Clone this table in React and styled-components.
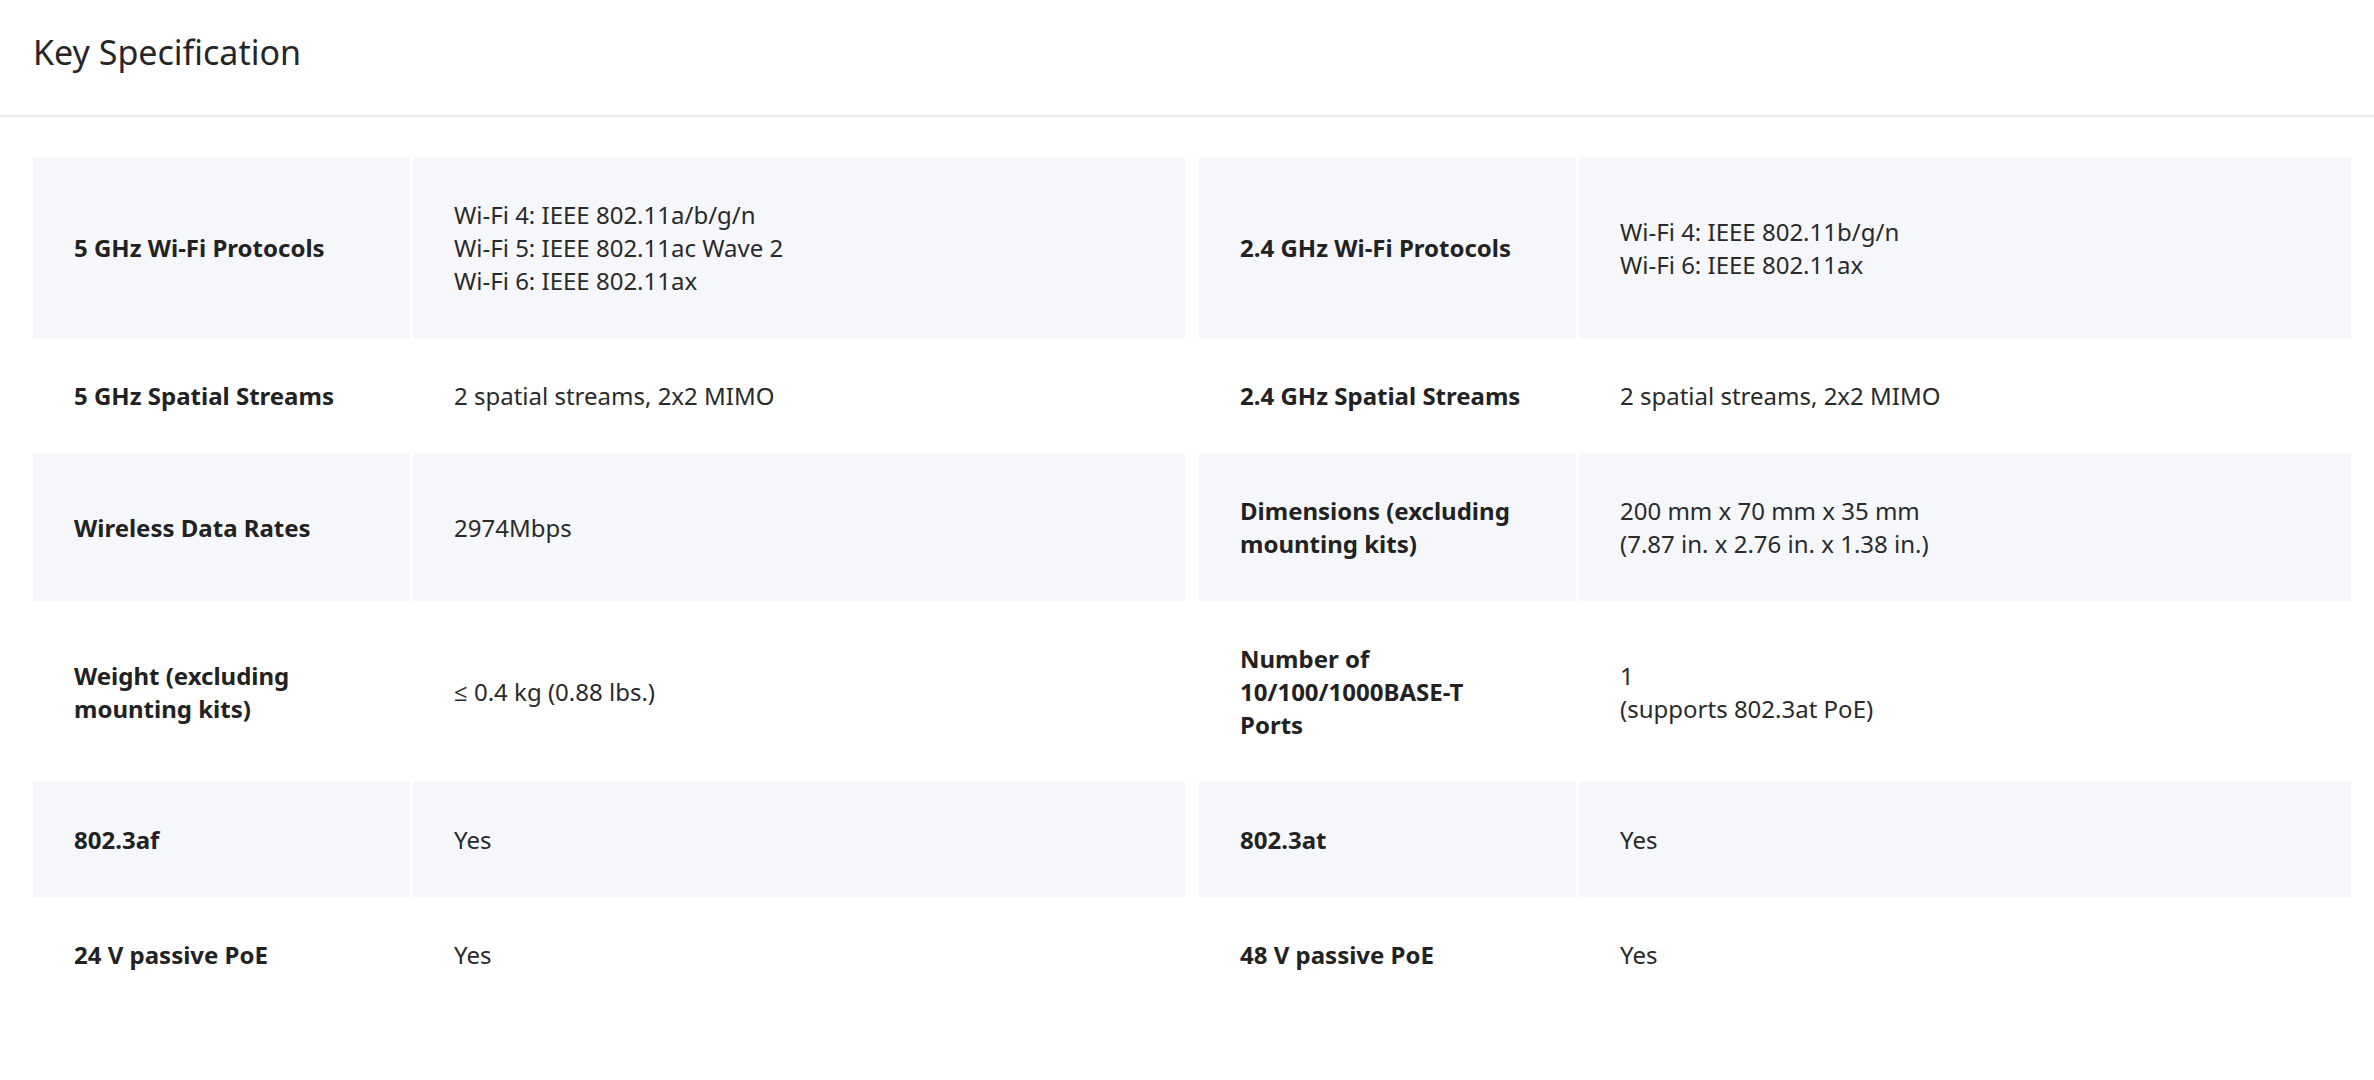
import React from "react";
import styled, { createGlobalStyle } from "styled-components";

const specs = [
  [
    {
      label: "5 GHz Wi-Fi Protocols",
      value: [
        "Wi-Fi 4: IEEE 802.11a/b/g/n",
        "Wi-Fi 5: IEEE 802.11ac Wave 2",
        "Wi-Fi 6: IEEE 802.11ax",
      ],
    },
    {
      label: "2.4 GHz Wi-Fi Protocols",
      value: ["Wi-Fi 4: IEEE 802.11b/g/n", "Wi-Fi 6: IEEE 802.11ax"],
    },
  ],
  [
    { label: "5 GHz Spatial Streams", value: ["2 spatial streams, 2x2 MIMO"] },
    { label: "2.4 GHz Spatial Streams", value: ["2 spatial streams, 2x2 MIMO"] },
  ],
  [
    { label: "Wireless Data Rates", value: ["2974Mbps"] },
    {
      label: "Dimensions (excluding mounting kits)",
      value: ["200 mm x 70 mm x 35 mm", "(7.87 in. x 2.76 in. x 1.38 in.)"],
    },
  ],
  [
    {
      label: "Weight (excluding mounting kits)",
      value: ["≤ 0.4 kg (0.88 lbs.)"],
    },
    {
      label: "Number of 10/100/1000BASE-T Ports",
      value: ["1", "(supports 802.3at PoE)"],
    },
  ],
  [
    { label: "802.3af", value: ["Yes"] },
    { label: "802.3at", value: ["Yes"] },
  ],
  [
    { label: "24 V passive PoE", value: ["Yes"] },
    { label: "48 V passive PoE", value: ["Yes"] },
  ],
];

const GlobalStyle = createGlobalStyle`
  body {
    margin: 0;
    background: #ffffff;
    font-family: "Noto Sans", "Open Sans", sans-serif;
  }
`;

const Page = styled.div`
  width: 2374px;
`;

const Header = styled.div`
  height: 117px;
  box-sizing: border-box;
  padding: 29px 0 0 33px;
  border-bottom: 2px solid #ececec;
`;

const Title = styled.h2`
  margin: 0;
  font-size: 34px;
  font-weight: 400;
  color: #262626;
  line-height: 46px;
`;

const Table = styled.div`
  margin-top: 40px;
  padding: 0 23px 0 33px;
  display: flex;
  flex-direction: column;
`;

const Row = styled.div`
  display: grid;
  grid-template-columns: 1fr 1fr;
  column-gap: 14px;
`;

const Pair = styled.div`
  display: grid;
  grid-template-columns: 377px 1fr;
  column-gap: 3px;
`;

const Cell = styled.div`
  display: flex;
  align-items: center;
  box-sizing: border-box;
  padding: 41px;
  background: ${(p) => (p.$shaded ? "#f6f7fa" : "transparent")};
  font-size: 24px;
  line-height: 33px;
`;

const Label = styled(Cell)`
  font-weight: 700;
  color: #222222;
  padding-right: 50px;
`;

const Value = styled(Cell)`
  color: #2a2a2a;
`;

const SpecPair = ({ item, shaded }) => (
  <Pair>
    <Label $shaded={shaded}>{item.label}</Label>
    <Value $shaded={shaded}>
      <div>
        {item.value.map((line, i) => (
          <div key={i}>{line}</div>
        ))}
      </div>
    </Value>
  </Pair>
);

export default function App() {
  return (
    <Page>
      <GlobalStyle />
      <Header>
        <Title>Key Specification</Title>
      </Header>
      <Table>
        {specs.map((row, i) => (
          <Row key={i}>
            {row.map((item, j) => (
              <SpecPair key={j} item={item} shaded={i % 2 === 0} />
            ))}
          </Row>
        ))}
      </Table>
    </Page>
  );
}
